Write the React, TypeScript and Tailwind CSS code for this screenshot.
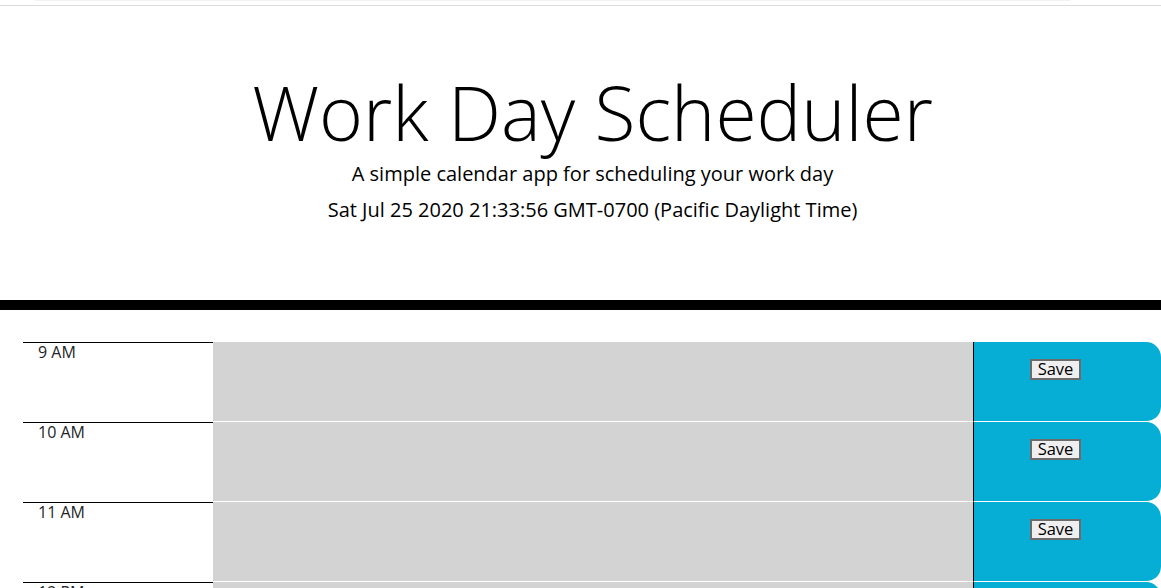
import React from 'react';

const hours = ['9 AM', '10 AM', '11 AM', '12 PM', '1 PM'];

const TimeBlock: React.FC<{ label: string }> = ({ label }) => (
  <div className="flex h-[80px]">
    <div className="w-[190px] shrink-0 border-t border-black pl-[15px] text-[16px] leading-[18px] text-[#212529]">
      {label}
    </div>
    <div className="w-[760px] shrink-0 bg-[#d3d3d3] border-b border-white" />
    <div className="w-[188px] shrink-0 flex items-start bg-[#06aed5] border-l border-black border-b border-b-white rounded-r-[15px] pl-[56px] pt-[17px]">
      <button className="w-[51px] h-[21px] flex items-center justify-center bg-[#efefef] border-2 border-[#6b6b6b] text-[16.5px] leading-none text-black">
        Save
      </button>
    </div>
  </div>
);

export default function App() {
  return (
    <div className="w-[1161px] h-[588px] overflow-hidden bg-white" style={{ fontFamily: '"Open Sans", sans-serif' }}>
      <div className="h-[1px] ml-[35px] w-[1035px] bg-[#f2f2f2]" />
      <div className="mt-[4px] h-[1px] bg-[#dcdcdc]" />
      <div className="w-[1185px]">
        <header className="h-[294px] pt-[61px] text-center text-black">
          <h1 className="text-[75px] leading-[90px] font-light">Work Day Scheduler</h1>
          <p className="mt-[2px] text-[20px] leading-[30px]">A simple calendar app for scheduling your work day</p>
          <p className="mt-[6px] text-[20px] leading-[30px]">Sat Jul 25 2020 21:33:56 GMT-0700 (Pacific Daylight Time)</p>
        </header>
        <div className="h-[10px] bg-black" />
        <div className="pt-[32px] pl-[23px]">
          {hours.map(h => (
            <TimeBlock key={h} label={h} />
          ))}
        </div>
      </div>
    </div>
  );
}
